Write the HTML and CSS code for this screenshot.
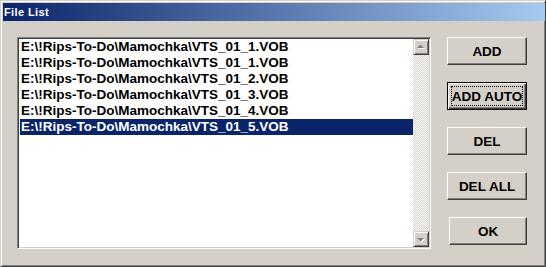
FILE: index.html
```html
<!DOCTYPE html>
<html>
<head>
<meta charset="utf-8">
<link rel="stylesheet" href="styles.css">
</head>
<body>
<div class="window">
  <div class="titlebar"><span class="title">File List</span></div>
  <div class="body">
    <div class="listbox">
      <ul class="items">
        <li class="item">E:\!Rips-To-Do\Mamochka\VTS_01_1.VOB</li>
        <li class="item">E:\!Rips-To-Do\Mamochka\VTS_01_1.VOB</li>
        <li class="item">E:\!Rips-To-Do\Mamochka\VTS_01_2.VOB</li>
        <li class="item">E:\!Rips-To-Do\Mamochka\VTS_01_3.VOB</li>
        <li class="item">E:\!Rips-To-Do\Mamochka\VTS_01_4.VOB</li>
        <li class="item selected">E:\!Rips-To-Do\Mamochka\VTS_01_5.VOB</li>
      </ul>
      <div class="scrollbar">
        <div class="sbtn">
          <svg width="14" height="14" viewBox="0 0 14 14"><path d="M4 9h7l-3.5-3.5z" fill="#fff"/><path d="M3 8h7L6.5 4.5z" fill="#808080"/></svg>
        </div>
        <div class="track"></div>
        <div class="sbtn">
          <svg width="14" height="14" viewBox="0 0 14 14"><path d="M4 7h7l-3.5 3.5z" fill="#fff"/><path d="M3 6h7L6.5 9.5z" fill="#808080"/></svg>
        </div>
      </div>
    </div>
    <div class="buttons">
      <button class="btn">ADD</button>
      <button class="btn default"><span class="focus">ADD AUTO</span></button>
      <button class="btn">DEL</button>
      <button class="btn">DEL ALL</button>
      <button class="btn ok">OK</button>
    </div>
  </div>
</div>
</body>
</html>
```

FILE: styles.css
```css
html, body {
  margin: 0;
  padding: 0;
  background: #d4d0c8;
}

.window {
  width: 546px;
  height: 267px;
  box-sizing: border-box;
  background: #d4d0c8;
  border: 1px solid;
  border-color: #d4d0c8 #404040 #404040 #d4d0c8;
  box-shadow: inset 1px 1px #fff, inset -1px -1px #808080;
  padding: 2px 0 0 2px;
  display: flex;
  flex-direction: column;
  font-family: "Liberation Sans", Arial, sans-serif;
}

.titlebar {
  height: 18px;
  background: linear-gradient(to right, #0a246a, #a6caf0);
  display: flex;
  align-items: center;
  padding-left: 1px;
}

.title {
  color: #fff;
  font-weight: bold;
  font-size: 11px;
  letter-spacing: 0.4px;
  line-height: 18px;
}

.body {
  display: flex;
  padding: 16px 0 0 14px;
}

.listbox {
  width: 414px;
  height: 212px;
  box-sizing: border-box;
  background: #fff;
  border: 1px solid;
  border-color: #808080 #fff #fff #808080;
  box-shadow: inset 1px 1px #404040, inset -1px -1px #d4d0c8;
  padding: 1px;
  display: flex;
}

.items {
  list-style: none;
  margin: 0;
  padding: 0 0 0 1px;
  flex: 1;
}

.item {
  height: 16px;
  line-height: 16px;
  font-size: 13.5px;
  font-weight: bold;
  color: #000;
  padding-left: 1px;
  white-space: nowrap;
}

.item.selected {
  background: #0a246a;
  color: #fff;
}

.scrollbar {
  width: 16px;
  display: flex;
  flex-direction: column;
}

.sbtn {
  width: 16px;
  height: 16px;
  box-sizing: border-box;
  background: #d4d0c8;
  border: 1px solid;
  border-color: #d4d0c8 #404040 #404040 #d4d0c8;
  box-shadow: inset 1px 1px #fff, inset -1px -1px #808080;
  display: flex;
}

.sbtn svg {
  display: block;
}

.track {
  flex: 1;
  background: repeating-conic-gradient(#d4d0c8 0 25%, #fff 0 50%) 0 0 / 2px 2px;
}

.buttons {
  display: flex;
  flex-direction: column;
  align-items: flex-end;
  gap: 17px;
  margin-left: 16px;
  width: 80px;
}

.btn {
  width: 80px;
  height: 28px;
  box-sizing: border-box;
  padding: 0;
  margin: 0;
  background: #d4d0c8;
  border: 1px solid;
  border-color: #fff #404040 #404040 #fff;
  box-shadow: inset -1px -1px #808080;
  font-family: "Liberation Sans", Arial, sans-serif;
  font-size: 13.5px;
  font-weight: bold;
  color: #000;
  white-space: nowrap;
  display: flex;
  align-items: center;
  justify-content: center;
}

.btn.ok {
  width: 78px;
}

.btn.default {
  border: 1px solid #000;
  box-shadow: inset 1px 1px #fff, inset -1px -1px #404040, inset -2px -2px #808080;
  padding: 3px;
  align-items: stretch;
}

.focus {
  flex: 1;
  min-width: 0;
  border: 1px dotted #000;
  white-space: nowrap;
  display: flex;
  align-items: center;
  justify-content: center;
}
```
